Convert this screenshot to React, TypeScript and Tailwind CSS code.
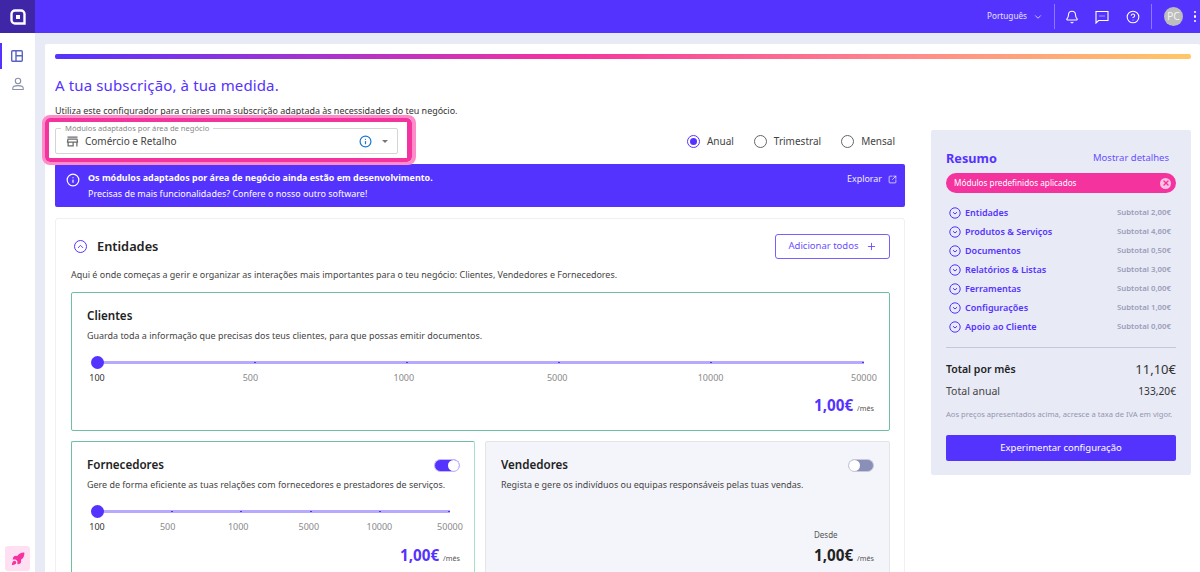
import React from "react";
import { ChevronDown, Bell, CircleHelp, Info, Plus, SquareArrowOutUpRight, X, Rocket, ChevronUp } from "lucide-react";

const summary = [
  ["Entidades", "2,00€"],
  ["Produtos & Serviços", "4,60€"],
  ["Documentos", "0,50€"],
  ["Relatórios & Listas", "3,00€"],
  ["Ferramentas", "0,00€"],
  ["Configurações", "1,00€"],
  ["Apoio ao Cliente", "0,00€"],
];

function Slider() {
  const labels = ["100", "500", "1000", "5000", "10000", "50000"];
  return (
    <div className="mt-[14px]">
      <div className="relative h-[13px] flex items-center">
        <div className="h-[3px] w-full bg-[#b8a9ff]" />
        <div className="absolute inset-0 flex items-center justify-between">
          {labels.map((l, i) => (
            <div key={l} className={i === 0 ? "w-[13px] h-[13px] -ml-[6px] rounded-full bg-[#5533ff]" : "w-[2px] h-[1.5px] bg-[#5533ff]"} />
          ))}
        </div>
      </div>
      <div className="flex justify-between mt-[1px] h-[16px] text-[9px] leading-[16px] text-[#8a8a8a]">
        {labels.map((l, i) => (
          <div key={l} className="w-0 flex justify-center">
            <span className={i === 0 ? "text-[#333]" : ""}>{l}</span>
          </div>
        ))}
      </div>
    </div>
  );
}

function Price({ color }: { color: string }) {
  return (
    <div className="flex justify-end items-baseline gap-[4px]">
      <span className={`text-[15.2px] leading-[22px] font-bold ${color}`}>1,00€</span>
      <span className="text-[7.2px] text-[#555]">/mês</span>
    </div>
  );
}

function Radio({ label, on }: { label: string; on?: boolean }) {
  return (
    <div className="flex items-center gap-[7px]">
      <div className={`w-[13px] h-[13px] rounded-full border-[1.5px] flex items-center justify-center ${on ? "border-[#5533ff]" : "border-[#666]"}`}>
        {on && <div className="w-[7px] h-[7px] rounded-full bg-[#5533ff]" />}
      </div>
      <span className="text-[10px] text-[#444]">{label}</span>
    </div>
  );
}

function CircleChevron() {
  return (
    <svg width="12" height="12" viewBox="0 0 12 12" fill="none" stroke="#5533ff" className="shrink-0">
      <circle cx="6" cy="6" r="5.2" strokeWidth="1" />
      <path d="M4 5.2 L6 7 L8 5.2" strokeWidth="1" />
    </svg>
  );
}

export default function App() {
  return (
    <div className="relative w-[1200px] h-[572px] overflow-hidden bg-[#e8eaf6] font-['Noto_Sans',sans-serif] flex flex-col">
      <header className="h-[33px] shrink-0 bg-[#5533ff] flex items-center text-white">
        <div className="w-[35px] h-[33px] bg-[#3f26a6] flex items-center justify-center">
          <svg width="16" height="16" viewBox="0 0 16 16" fill="none">
            <path d="M5 1.5 H11 A3.5 3.5 0 0 1 14.5 5 V14.5 H5 A3.5 3.5 0 0 1 1.5 11 V5 A3.5 3.5 0 0 1 5 1.5 Z" stroke="#fff" strokeWidth="2.4" />
            <rect x="6" y="6" width="4" height="4" fill="#fff" />
          </svg>
        </div>
        <div className="flex-1" />
        <span className="text-[8.2px] text-[#e5e0ff]">Português</span>
        <ChevronDown size={10} className="ml-[6px] text-[#e5e0ff]" />
        <div className="w-px h-[25px] bg-[#8d78ff] ml-[11px]" />
        <Bell size={14} strokeWidth={1.8} className="ml-[10px]" />
        <svg width="14" height="14" viewBox="0 0 14 14" fill="none" stroke="#fff" strokeWidth="1.1" className="ml-[16px]">
          <path d="M1 1.5 H13 V10.5 H3.5 L1 13 Z" />
          <path d="M4.5 6 H5.5 M6.5 6 H7.5 M8.5 6 H9.5" />
        </svg>
        <CircleHelp size={14} strokeWidth={1.8} className="ml-[17px]" />
        <div className="w-px h-[25px] bg-[#8d78ff] ml-[11px]" />
        <div className="ml-[12px] w-[19px] h-[19px] rounded-full bg-[#bdbdbd] flex items-center justify-center text-[10.5px] text-[#f4f4f4]">PC</div>
        <div className="ml-[10px] mr-[3px] w-[4px] flex flex-col items-center gap-[2px]">
          <div className="w-[2.5px] h-[2.5px] rounded-full bg-white" />
          <div className="w-[2.5px] h-[2.5px] rounded-full bg-white" />
          <div className="w-[2.5px] h-[2.5px] rounded-full bg-white" />
        </div>
      </header>
      <div className="flex flex-1 min-h-0">
        <aside className="w-[35px] shrink-0 bg-white flex flex-col">
          <div className="mt-[10px] h-[26px] border-l-2 border-[#5533ff] flex items-center justify-center pr-[4px]">
            <svg width="12" height="12" viewBox="0 0 12 12" fill="none" stroke="#5b63c4" strokeWidth="1.4">
              <rect x="0.7" y="0.7" width="10.6" height="10.6" rx="1" />
              <path d="M5 0.7 V11.3 M5 5.7 H11.3" />
            </svg>
          </div>
          <div className="mt-[8px] flex justify-center">
            <svg width="14" height="14" viewBox="0 0 14 14" fill="none" stroke="#8a90a8" strokeWidth="1.1">
              <circle cx="7" cy="4" r="2.7" />
              <path d="M1.8 12.5 V11 C1.8 9.3 4.5 8.6 7 8.6 C9.5 8.6 12.2 9.3 12.2 11 V12.5 Z" />
            </svg>
          </div>
          <div className="flex-1" />
          <div className="mb-[1px] ml-[5px] w-[25px] h-[25px] rounded-[3px] bg-[#ffe0f2] flex items-center justify-center">
            <Rocket size={14} className="text-[#f5339f] fill-[#f5339f]" />
          </div>
        </aside>
        <main className="ml-[10px] mt-[11px] w-[1155px] bg-white rounded-t-[2px] px-[10px] pt-[10px]">
          <div className="h-[5px] w-[1136px] rounded-[2px] bg-[linear-gradient(90deg,#5533ff_0%,#f5339f_45%,#ff8a8a_75%,#ffc766_100%)]" />
          <h1 className="mt-[15px] text-[15px] leading-[22px] text-[#5533ff] tracking-[0.13px]">A tua subscrição, à tua medida.</h1>
          <p className="mt-[8px] text-[8.95px] leading-[13px] text-[#333]">Utiliza este configurador para criares uma subscrição adaptada às necessidades do teu negócio.</p>
          <div className="flex gap-[26px]">
            <div className="w-[850px] shrink-0">
              <div className="mt-[11px] flex items-center justify-between">
                <div className="relative w-[343px] h-[26px] border border-[#d5d5d5] rounded-[2px] flex items-center pl-[9px] pr-[9px]">
                  <span className="absolute -top-[6px] left-[5px] px-[4px] bg-white text-[7.6px] leading-[10px] text-[#888]">Módulos adaptados por área de negócio</span>
                  <svg width="15" height="15" viewBox="0 0 24 24" fill="#6b6b6b">
                    <path d="M4 4h16v2H4zm16 3H4l-1 5v2h1v6h10v-6h4v6h2v-6h1v-2l-1-5zm-8 11H6v-4h6v4zm-6.96-6l.6-3h12.72l.6 3H5.04z" />
                  </svg>
                  <span className="ml-[5px] text-[10px] text-[#444]">Comércio e Retalho</span>
                  <div className="flex-1" />
                  <Info size={13} strokeWidth={2.2} className="text-[#1976d2]" />
                  <div className="ml-[10px] w-0 h-0 border-x-[3px] border-x-transparent border-t-[3px] border-t-[#777]" />
                </div>
                <div className="flex items-center gap-[20px] mr-[10px]">
                  <Radio label="Anual" on />
                  <Radio label="Trimestral" />
                  <Radio label="Mensal" />
                </div>
              </div>
              <div className="mt-[10px] h-[43px] rounded-[2px] bg-[#5533ff] text-white flex pl-[11px] pr-[8px] pt-[6px]">
                <Info size={14} className="mt-[3px] shrink-0" />
                <div className="ml-[8px] flex-1 text-[8.95px] leading-[16px]">
                  <div className="font-bold">Os módulos adaptados por área de negócio ainda estão em desenvolvimento.</div>
                  <div>Precisas de mais funcionalidades? Confere o nosso outro software!</div>
                </div>
                <span className="mt-[1px] text-[8.9px] leading-[16px] text-[#f0edff]">Explorar</span>
                <SquareArrowOutUpRight size={9} className="ml-[6px] mt-[5px] text-[#f0edff]" />
              </div>
              <section className="mt-[11px] border border-[#f0f0f0] rounded-t-[3px] pl-[15px] pr-[14px] pt-[15px] h-[400px]">
                <div className="flex items-center justify-between h-[25px]">
                  <div className="flex items-center">
                    <div className="ml-[3px] w-[13px] h-[13px] rounded-full border-[1.5px] border-[#5533ff] flex items-center justify-center">
                      <ChevronUp size={9} className="text-[#5533ff]" strokeWidth={2.5} />
                    </div>
                    <h2 className="ml-[10px] text-[12.8px] font-semibold text-[#222]">Entidades</h2>
                  </div>
                  <button className="w-[115px] h-[25px] border border-[#7a5fff] rounded-[3px] flex items-center justify-center text-[9.5px] text-[#6a4fff]">
                    Adicionar todos
                    <Plus size={11} className="ml-[7px]" />
                  </button>
                </div>
                <p className="mt-[9px] text-[8.95px] leading-[13px] text-[#444]">Aqui é onde começas a gerir e organizar as interações mais importantes para o teu negócio: Clientes, Vendedores e Fornecedores.</p>
                <div className="mt-[11px] h-[139px] border border-[#6fc0a0] rounded-[2px] px-[15px] pt-[14px]">
                  <h3 className="text-[11.6px] leading-[17px] font-semibold text-[#222]">Clientes</h3>
                  <p className="mt-[5px] text-[8.95px] leading-[13px] text-[#444]">Guarda toda a informação que precisas dos teus clientes, para que possas emitir documentos.</p>
                  <div className="px-[10px]"><Slider /></div>
                  <div className="mt-[8px]"><Price color="text-[#5533ff]" /></div>
                </div>
                <div className="mt-[10px] flex gap-[10px]">
                  <div className="w-[404px] h-[140px] border border-[#6fc0a0] border-r-[#a8dfc8] rounded-[2px] pl-[15px] pr-[14px] pt-[14px]">
                    <div className="flex items-center justify-between">
                      <h3 className="text-[11.6px] leading-[17px] font-semibold text-[#222]">Fornecedores</h3>
                      <div className="mt-[2px] w-[26px] h-[13px] rounded-full bg-[#5533ff] border border-[#c5b8ff] flex justify-end">
                        <div className="w-[11px] h-[11px] rounded-full bg-white" />
                      </div>
                    </div>
                    <p className="mt-[5px] text-[8.95px] leading-[13px] text-[#444]">Gere de forma eficiente as tuas relações com fornecedores e prestadores de serviços.</p>
                    <div className="px-[10px]"><Slider /></div>
                    <div className="mt-[9px]"><Price color="text-[#5533ff]" /></div>
                  </div>
                  <div className="w-[405px] h-[140px] bg-[#f4f5fa] border border-[#e4e5ea] rounded-[2px] px-[15px] pt-[14px]">
                    <div className="flex items-center justify-between">
                      <h3 className="text-[11.6px] leading-[17px] font-semibold text-[#222]">Vendedores</h3>
                      <div className="mt-[2px] w-[26px] h-[13px] rounded-full bg-[#8a8fb8] border border-[#c8cadc] flex justify-start">
                        <div className="w-[11px] h-[11px] rounded-full bg-white" />
                      </div>
                    </div>
                    <p className="mt-[5px] text-[8.95px] leading-[13px] text-[#444]">Regista e gere os indivíduos ou equipas responsáveis pelas tuas vendas.</p>
                    <div className="mt-[38px] flex justify-end">
                      <div>
                        <div className="text-[8px] leading-[12px] text-[#555]">Desde</div>
                        <div className="mt-[3px]"><Price color="text-[#222]" /></div>
                      </div>
                    </div>
                  </div>
                </div>
              </section>
            </div>
            <aside className="mt-[13px] w-[260px] h-[345px] shrink-0 bg-[#e8eaf6] rounded-[2px] px-[15px] pt-[19px]">
              <div className="flex items-center justify-between pr-[7px]">
                <h2 className="text-[12.7px] leading-[18px] font-bold text-[#5533ff]">Resumo</h2>
                <span className="text-[9.5px] text-[#6a4fff]">Mostrar detalhes</span>
              </div>
              <div className="mt-[6px] h-[20px] rounded-full bg-[#f5339f] text-white flex items-center justify-between px-[8px] pr-[5px] text-[8.2px]">
                Módulos predefinidos aplicados
                <div className="w-[11px] h-[11px] rounded-full bg-[#ffc4e4] flex items-center justify-center">
                  <X size={8} className="text-[#f5339f]" strokeWidth={4} />
                </div>
              </div>
              <div className="mt-[13px] flex flex-col gap-[5px]">
                {summary.map(([n, v]) => (
                  <div key={n} className="h-[14px] flex items-center pl-[3px] pr-[5px]">
                    <CircleChevron />
                    <span className="ml-[4px] text-[9px] font-semibold text-[#5533ff]">{n}</span>
                    <span className="ml-auto text-[7.8px] font-semibold text-[#9a9cb8]">Subtotal {v}</span>
                  </div>
                ))}
              </div>
              <div className="mt-[13px] h-px bg-[#c5c5dc]" />
              <div className="mt-[12px] flex items-center justify-between h-[20px]">
                <span className="text-[10.5px] font-semibold text-[#222]">Total por mês</span>
                <span className="text-[13px] text-[#333]">11,10€</span>
              </div>
              <div className="mt-[2px] flex items-center justify-between h-[20px]">
                <span className="text-[10.5px] text-[#444]">Total anual</span>
                <span className="text-[10.2px] text-[#333]">133,20€</span>
              </div>
              <p className="mt-[6px] text-[7.6px] leading-[12px] text-[#9496b0] whitespace-nowrap">Aos preços apresentados acima, acresce a taxa de IVA em vigor.</p>
              <button className="mt-[15px] w-full h-[26px] rounded-[2px] bg-[#5533ff] text-white text-[9.5px]">Experimentar configuração</button>
            </aside>
          </div>
        </main>
      </div>
      <div className="absolute left-[42px] top-[115px] w-[374px] h-[50px] rounded-[8px] border-[3px] border-r-[4px] border-[#ff8cc8] pointer-events-none">
        <div className="w-full h-full rounded-[5px] border-[4px] border-r-[5px] border-[#f5339f]" />
      </div>
    </div>
  );
}
